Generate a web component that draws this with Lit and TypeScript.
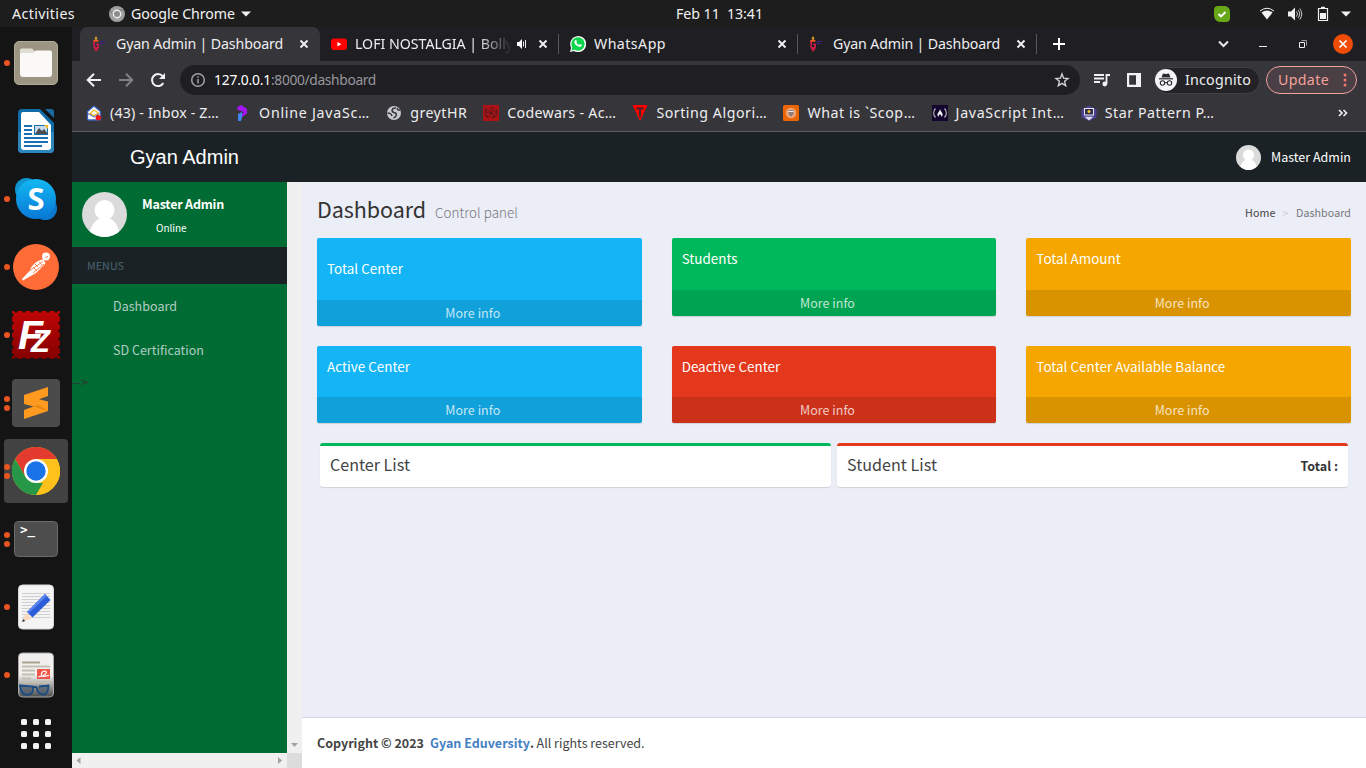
import { LitElement, html, css, svg, nothing } from "lit";
import { customElement, property, state } from "lit/decorators.js";
import { classMap } from "lit/directives/class-map.js";
import { styleMap } from "lit/directives/style-map.js";

/* A run of text tracked so that it occupies a given width. */
@customElement("fit-text")
class FitText extends LitElement {
  @property() text = "";
  @property({ type: Number }) w = 0;
  @state() tracking = 0;
  static styles = css`
    :host { display: inline-block; white-space: pre; flex: none; }
    .run { display: inline-block; }
  `;
  firstUpdated() {
    const run = this.renderRoot.querySelector(".run") as HTMLElement;
    const natural = run.getBoundingClientRect().width;
    if (this.w && this.text.length) this.tracking = (this.w - natural) / this.text.length;
  }
  render() {
    return html`<span class="run" style=${styleMap({ letterSpacing: `${this.tracking}px` })}>${this.text}</span>`;
  }
}

const t = (text: string, w: number) => html`<fit-text .text=${text} .w=${w}></fit-text>`;

const gyanIcon = svg`<svg width="16" height="16" viewBox="0 0 16 16">
  <path d="M4 0l1.500 2.500L4 4.500 2.500 2.500z" fill="#d99a22"/><path d="M1 4.500h5v1.500H3v5h2V9H4V7.500h3V12l-3 4-2.500-4z" fill="#c41c44"/><path d="M1.500 4h5v1.600h-5z" fill="#e0601c"/>
  <path d="M8 5.500h5.500M8 7.500h4M8.500 5v4" stroke="#41207f" fill="none"/></svg>`;
const youtubeIcon = svg`<svg width="16" height="16" viewBox="0 0 16 16"><rect y="2.500" width="16" height="11.500" rx="3" fill="#f00"/><path d="M6.400 6l4 2.200-4 2.200z" fill="#fff"/></svg>`;
const whatsappIcon = svg`<svg width="16" height="16" viewBox="0 0 16 16"><path d="M0 16l1.100-4.200A8 8 0 1 1 4 14.900z" fill="#fff"/><circle cx="8" cy="8" r="6.700" fill="#0cd54c"/><path d="M1.400 14.600l.9-3.400 2.400 2.500z" fill="#0cd54c"/>
  <path d="M5.200 4.200c.8-.7 1.300-.1 1.700 1.200.1.500-.6.900-.5 1.200.5 1 1.600 1.900 2.700 2.300.4 0 .7-.9 1.100-.8 1.800.7 1.800 1 1.300 1.800-1 1.500-3.100 1-4.900-.3C4.700 8.200 3.600 6 5.200 4.200z" fill="#fff"/></svg>`;
const crossIcon = svg`<svg width="16" height="16" viewBox="0 0 16 16"><path d="M4.500 4.500l7 7M11.500 4.500l-7 7" stroke="#f1f1f1" stroke-width="1.900"/></svg>`;
const audioIcon = svg`<svg width="14" height="14" viewBox="0 0 14 14"><path d="M2 5h2l3-3v10L4 9H2z" fill="#fff"/><path d="M8.500 4.500v5M10.500 3v8" stroke="#eee" stroke-width="1"/></svg>`;

interface Tab { icon: unknown; title: string; w: number; active?: boolean; audio?: boolean; }
const tabs: Tab[] = [
  { icon: gyanIcon, title: "Gyan Admin | Dashboard", w: 167, active: true },
  { icon: youtubeIcon, title: "LOFI NOSTALGIA | Bolly", w: 158, audio: true },
  { icon: whatsappIcon, title: "WhatsApp", w: 72 },
  { icon: gyanIcon, title: "Gyan Admin | Dashboard", w: 167 },
];

const bookmarks = [
  { title: "(43) - Inbox - Z…", w: 109, icon: svg`<svg width="16" height="16" viewBox="0 0 16 16"><path d="M1.500 6.500L8 1l6.500 5.500V14q0 1-1 1h-11q-1 0-1-1z" fill="#fff" stroke="#3b5fbd" stroke-width="1.300"/><path d="M4 8.500L8 5l4.500 3L8 10.500z" fill="#fff" stroke="#f0b51c" stroke-width="1.200"/><path d="M2 8.500L8 12l5.500-3.500" fill="none" stroke="#3b5fbd"/><circle cx="12.300" cy="12.800" r="2.700" fill="#f01818"/></svg>` },
  { title: "Online JavaSc…", w: 111, icon: svg`<svg width="16" height="16" viewBox="0 0 16 16"><path d="M2.500 2L6 0l6 4v4.500L7 12V9l2-2-6.500-2z" fill="#a515f5"/><path d="M3 9l4-2v5l-1 4H3z" fill="#3f86ee"/></svg>` },
  { title: "greytHR", w: 57, icon: svg`<svg width="16" height="16" viewBox="0 0 16 16"><circle cx="8" cy="8" r="7" fill="#c7cad0"/><path d="M10 3C5.500 3 5 6.500 8 7.500c4 1 2.500 4-.5 5.500M1.500 8c2.500 0 4 1 4.500 3M11 3l1 2h2" stroke="#37363b" stroke-width="1.500" fill="none"/></svg>` },
  { title: "Codewars - Ac…", w: 109, icon: svg`<svg width="16" height="16" viewBox="0 0 16 16"><rect width="16" height="16" fill="#ae1215"/><path d="M8 8C5 6 7 2 11 3M8 8c1-4 5-3 5 1M8 8c4 0 4 4 1 5M8 8c1 4-3 5-5 2M8 8C4 9 2 6 5 4M3 2.500C1.500 6 2 10 4.500 13M13 4c2 4 0 8-3 9" stroke="#4a1a1d" stroke-width="1" fill="none"/></svg>` },
  { title: "Sorting Algori…", w: 111, icon: svg`<svg width="16" height="16" viewBox="0 0 16 16"><path d="M.5 0h15L8 16z" fill="#f00"/><path d="M4.500 3.500h7M8 3.500V12" stroke="#43252a" stroke-width="2"/></svg>` },
  { title: "What is `Scop…", w: 108, icon: svg`<svg width="16" height="16" viewBox="0 0 16 16"><rect width="16" height="16" rx="1.500" fill="#ec6608"/><circle cx="8" cy="8" r="5.200" fill="#f0a678"/><path d="M5.500 5h5v4L8 12 5.500 9z" fill="#8a8078"/><path d="M5.500 6.500h5" stroke="#eee"/></svg>` },
  { title: "JavaScript Int…", w: 109, icon: svg`<svg width="16" height="16" viewBox="0 0 16 16"><rect width="16" height="16" fill="#13052d"/><path d="M3.500 3.500c-2.500 2.500-2.500 6.500 0 9M12.500 3.500c2.500 2.500 2.500 6.500 0 9" stroke="#bbb" stroke-width="1.100" fill="none"/><path d="M8 3.500c0 3-2.600 4-2.600 6.500L6.500 12c0-2 1-2 1.500-3 .5 1 1.500 1 1.500 3l1.200-2C10.700 7 8 6.500 8 3.500z" fill="#f5f5f5"/></svg>` },
  { title: "Star Pattern P…", w: 110, icon: svg`<svg width="16" height="16" viewBox="0 0 16 16"><path d="M8 .5l7.500 4v8L8 16 .5 12.500v-8z" fill="#4b4192"/><rect x="3.500" y="3.500" width="9" height="6.500" fill="#2c2c4c" stroke="#e8e8f4"/><circle cx="8" cy="6.500" r="1.500" fill="#f5c527"/><path d="M3.500 11.800h9L8 15.500z" fill="#dcdcec"/></svg>` },
];

const avatar = (size: number) => svg`<svg width=${size} height=${size} viewBox="0 0 45 45">
  <defs><clipPath id="disc"><circle cx="22.500" cy="22.500" r="22.500"/></clipPath></defs>
  <g clip-path="url(#disc)"><rect width="45" height="45" fill="#dbdbdb"/><circle cx="22.500" cy="18" r="10" fill="#fff"/><path d="M7 45C8 33 14 28 18 26h9c5 2 10 7 11 19z" fill="#fff"/></g></svg>`;

/* Launcher icons, each drawn in a 48px square. */
const files = svg`<svg width="48" height="48" viewBox="0 0 48 48"><rect x="2.500" y="2.500" width="43" height="43" rx="4.500" fill="#9c9583" stroke="#b0aa9a"/><path d="M8 13v-2q0-1.500 1.500-1.500H20l3 3h16v7H8z" fill="#e1ded4"/><path d="M8 15.500q0-1.500 1.500-1.500H21l3-2.500h14q2 0 2 2V35q0 3-3 3H11q-3 0-3-3z" fill="#faf9f8"/></svg>`;
const writer = svg`<svg width="48" height="48" viewBox="0 0 48 48"><path d="M10 2h18l14 14v26q0 4-4 4H10q-4 0-4-4V6q0-4 4-4z" fill="#0f6ca8"/><path d="M6 25h36v17q0 4-4 4H10q-4 0-4-4z" fill="#2b87bb"/><path d="M33 2h6q3 0 3 3v6z" fill="#1c6d9f"/><path d="M11 5h16l12 13v22q0 3-3 3H12q-3 0-3-3V8q0-3 2-3z" fill="#fff"/>
  <path d="M12 19h8M12 23h8M12 27h8M12 31h24M12 35h24M12 39h18" stroke="#1b72b3" stroke-width="2"/><rect x="22.500" y="18.500" width="13" height="9" fill="#c6dceb" stroke="#1b6faa"/><path d="M23 27l4-6 3 3 2-2 4 5z" fill="#4b4d50"/><path d="M32 18h4v4z" fill="#f0b91a"/></svg>`;
const skype = svg`<svg width="48" height="48" viewBox="0 0 48 48"><defs><linearGradient id="sky" x1="0" y1="0" x2="0" y2="1"><stop offset="0" stop-color="#13b8f1"/><stop offset="1" stop-color="#0878d7"/></linearGradient></defs>
  <circle cx="14.500" cy="14.500" r="11.500" fill="#0f94d2"/><circle cx="33.500" cy="33.500" r="11.500" fill="#0a78cf"/><circle cx="24" cy="24" r="20" fill="url(#sky)"/><text x="24" y="35" text-anchor="middle" font-family="Noto Sans" font-weight="700" font-size="31" fill="#fff">S</text></svg>`;
const postman = svg`<svg width="48" height="48" viewBox="0 0 48 48"><circle cx="24" cy="24" r="23" fill="#ff6c37"/><circle cx="34" cy="13.500" r="3.900" fill="#fff"/><path d="M31.500 16.500c-5 0-12 5-13.500 11L10 36l1 1.500 13-7.500 9.500-9.500z" fill="#fff"/><path d="M18 27.500l13-9M21 30l11-9M23 21l3 3M21 24l4 4M27 19l3 3" stroke="#ff6c37" stroke-width=".8" fill="none"/><path d="M33 14.500l3-1" stroke="#ff6c37" stroke-width=".8"/></svg>`;
const filezilla = svg`<svg width="48" height="48" viewBox="0 0 48 48"><defs><linearGradient id="fz" x1="0" y1="0" x2="0" y2="1"><stop offset="0" stop-color="#c00505"/><stop offset="1" stop-color="#850000"/></linearGradient></defs>
  <rect width="48" height="48" fill="url(#fz)"/><rect width="48" height="48" fill="none" stroke="#141414" stroke-width="3.400" stroke-linecap="round" stroke-dasharray="0 8" stroke-dashoffset="-4"/>
  <text x="6" y="38" font-family="Liberation Sans" font-weight="700" font-style="italic" font-size="41" fill="#fff">F<tspan dx="-12" dy="3" font-size="31">Z</tspan></text></svg>`;
const sublime = svg`<svg width="48" height="48" viewBox="0 0 48 48"><rect width="48" height="48" rx="4" fill="#4b4b4b"/><path d="M12 16l24-8v9l-9 3.300 9 2.200V32l-24 8v-9l9.500-3.500L12 25z" fill="#ff9a20"/><path d="M21.500 27.500L26 26l10 5.500v.5z" fill="#e8860f"/></svg>`;
const chrome = svg`<svg width="48" height="48" viewBox="0 0 48 48"><circle cx="24" cy="24" r="24" fill="#fbc116"/><path d="M3.200 12A24 24 0 0 1 44.800 12H24L13.600 30z" fill="#e33b2e"/><path d="M3.200 12l10.400 18L24 36h10.400L24 48A24 24 0 0 1 3.200 12z" fill="#279847"/><path d="M34.400 30L24 48a24 24 0 0 0 20.800-36H24z" fill="#fcc21b"/><circle cx="24" cy="24" r="12" fill="#fff"/><circle cx="24" cy="24" r="9.700" fill="#1a73e8"/></svg>`;
const terminal = svg`<svg width="48" height="48" viewBox="0 0 48 48"><rect x="2.500" y="6.500" width="43" height="35" rx="4" fill="#4d4d4d" stroke="#6c6c6c"/><text x="8" y="19" font-family="DejaVu Sans Mono" font-weight="700" font-size="12.500" fill="#fff">&gt;_</text></svg>`;
const editor = svg`<svg width="48" height="48" viewBox="0 0 48 48"><rect x="6.500" y="2" width="35" height="44" rx="4" fill="#f4f4f4" stroke="#d8d8d8"/><path d="M10 10.500h28M10 13.500h28M10 16.500h28M10 19.500h28M10 22.500h28M10 25.500h28M10 28.500h28M10 31.500h28M10 34.500h28" stroke="#cfcfcf"/><path d="M10 39l4-9 6 5z" fill="#fbd9be"/><path d="M10 39l1.200-3 2 2z" fill="#333"/><path d="M15 29l18-18 5.500 6-18 17.500z" fill="#2c5cd8"/><path d="M15 29l18-18 2 2-18 17z" fill="#5583ee"/></svg>`;
const viewer = svg`<svg width="48" height="48" viewBox="0 0 48 48"><defs><linearGradient id="vw" x1="0" y1="0" x2="0" y2="1"><stop offset=".5" stop-color="#f1f0ee"/><stop offset="1" stop-color="#4c4c4c"/></linearGradient></defs><rect x="6.500" y="2" width="35" height="44" rx="4" fill="url(#vw)" stroke="#a8a8a8"/><path d="M10 11.500h18" stroke="#a8a290" stroke-width="2"/><path d="M10 15.500h28M10 19.500h13M10 23.500h13M10 27.500h9M10 31.500h28" stroke="#c2beb0" stroke-width="1.800"/><rect x="25" y="18" width="13" height="10" fill="#ef5548"/><path d="M26.500 25.500c6 .5 10-5 6.500-5.500-4 0-5 5.500-1.500 5.500 2 0 4-1.500 5.500-1" fill="none" stroke="#fff" stroke-width="1.200"/><path d="M8 34.500l13 1q1 8-5 8.300-6 0-7-5zM27 35.500l9.500-1q0 8-4.500 9-6 0-7-5l-1-2.500h-3" fill="#53606e" fill-opacity=".7" stroke="#1b4c84" stroke-width="1.800"/></svg>`;
const grid = svg`<svg width="48" height="48" viewBox="0 0 48 48">${[9, 21, 33].map((y) => [9, 21, 33].map((x) => svg`<rect x=${x} y=${y} width="6" height="6" rx="1.500" fill="#f2f2f2"/>`))}</svg>`;

const dock = [
  { icon: files, dots: 1 }, { icon: writer, dots: 0 }, { icon: skype, dots: 1 }, { icon: postman, dots: 1 },
  { icon: filezilla, dots: 1 }, { icon: sublime, dots: 2 }, { icon: chrome, dots: 2, on: true }, { icon: terminal, dots: 2 },
  { icon: editor, dots: 1 }, { icon: viewer, dots: 1 },
];

@customElement("ubuntu-dock")
class UbuntuDock extends LitElement {
  static styles = css`
    :host { display: flex; flex-direction: column; width: 72px; flex: none; background: #141414; padding-top: 2px; box-sizing: border-box; }
    .item { display: flex; align-items: center; height: 68px; padding-left: 4px; }
    .tile { display: flex; align-items: center; height: 64px; width: 64px; border-radius: 4px; }
    .tile.on { background: #424242; }
    .dots { display: flex; flex-direction: column; gap: 3px; width: 8px; }
    .dot { width: 6px; height: 6px; border-radius: 50%; background: #e95420; }
    .apps { display: flex; justify-content: center; padding-top: 1px; }
    svg { display: block; }
  `;
  render() {
    return html`${dock.map((d) => html`<div class="item"><div class=${classMap({ tile: true, on: !!d.on })}>
        <div class="dots">${Array.from({ length: d.dots }, () => html`<span class="dot"></span>`)}</div>${d.icon}</div></div>`)}
      <div class="apps">${grid}</div>`;
  }
}

@customElement("chrome-frame")
class ChromeFrame extends LitElement {
  static styles = css`
    :host { display: flex; flex-direction: column; height: 105px; flex: none; background: #36353a; color: #eeeef0; font: 14.200px/20px "Noto Sans", sans-serif; box-sizing: border-box; border-bottom: 1px solid #5b5a5f; }
    svg { display: block; flex: none; }
    .strip { display: flex; height: 34px; background: #1f1e23; padding-left: 8px; }
    .tab { display: flex; align-items: center; width: 239px; box-sizing: border-box; padding: 0 8px 0 11px; gap: 8px; }
    .tab:first-child { width: 240px; padding-left: 12px; }
    .tab.active { background: #36353a; border-radius: 8px 8px 0 0; }
    .tab.line { background: linear-gradient(#58575c, #58575c) right 7px / 1px 20px no-repeat; }
    .title { flex: 1; overflow: hidden; height: 20px; white-space: nowrap; }
    .title.fade { mask-image: linear-gradient(90deg, #000 78%, transparent); }
    .audio { margin-right: -2px; margin-left: -5px; }
    .plus { display: flex; align-items: center; margin-left: 15px; }
    .wins { display: flex; align-items: center; margin-left: auto; padding-right: 13px; gap: 20px; }
    .bar { display: flex; align-items: center; height: 38px; padding-left: 6px; }
    .cell { display: flex; justify-content: center; width: 32px; }
    .omni { display: flex; align-items: center; box-sizing: border-box; width: 900px; height: 30px; border-radius: 15px; background: #1f1e23; margin: 0 6px; padding: 0 10px; gap: 8px; font-size: 13.800px; }
    .host { display: flex; flex: 1; color: #fff; }
    .path { color: #98979c; }
    .inc { display: flex; align-items: center; box-sizing: border-box; margin-left: 4px; width: 106px; height: 27px; border-radius: 14px; background: #232327; border: 1px solid #414045; gap: 8px; }
    .upd { display: flex; align-items: center; box-sizing: border-box; margin-left: 6px; width: 91px; height: 28px; border-radius: 14px; border: 1px solid #f0a29c; background: #493f44; color: #f3a29b; padding-left: 11px; gap: 14px; }
    .marks { display: flex; align-items: center; height: 28px; padding: 0 16px 0 14px; gap: 16.100px; }
    .mark { display: flex; align-items: center; gap: 8px; }
    .more { margin-left: auto; }
  `;
  render() {
    return html`
      <div class="strip">
        ${tabs.map((tab) => html`<div class=${classMap({ tab: true, active: !!tab.active, line: !tab.active })}>
          ${tab.icon}<div class=${classMap({ title: true, fade: !!tab.audio })}>${t(tab.title, tab.w)}</div>
          ${tab.audio ? html`<span class="audio">${audioIcon}</span>` : nothing}${crossIcon}</div>`)}
        <div class="plus"><svg width="14" height="14" viewBox="0 0 14 14"><path d="M7 1v12M1 7h12" stroke="#fff" stroke-width="2"/></svg></div>
        <div class="wins">
          <svg width="20" height="20" viewBox="0 0 20 20"><path d="M6 7.500l4.500 4.500L15 7.500" stroke="#e8e8e8" stroke-width="2" fill="none"/></svg>
          <svg width="20" height="20" viewBox="0 0 20 20"><path d="M6 12.500h8" stroke="#eee"/></svg>
          <svg width="20" height="20" viewBox="0 0 20 20"><path d="M6.500 8.500h5v5h-5z" stroke="#eee" fill="none"/><path d="M8.500 6.500h5v5" stroke="#99989c" fill="none"/></svg>
          <svg width="20" height="20" viewBox="0 0 20 20"><circle cx="10" cy="10" r="10" fill="#ef4c07"/><path d="M6.500 6.500l7 7M13.500 6.500l-7 7" stroke="#fff" stroke-width="1.700"/></svg>
        </div>
      </div>
      <div class="bar">
        <span class="cell"><svg width="16" height="16" viewBox="0 0 16 16"><path d="M15 8H2.500M8 1.700L1.700 8 8 14.300" stroke="#f1f1f3" stroke-width="2" fill="none"/></svg></span>
        <span class="cell"><svg width="16" height="16" viewBox="0 0 16 16"><path d="M1 8h12.500M8 1.700L14.300 8 8 14.300" stroke="#828186" stroke-width="2" fill="none"/></svg></span>
        <span class="cell"><svg width="16" height="16" viewBox="0 0 16 16"><path d="M13.300 11A6 6 0 1 1 12.600 4.200" stroke="#f1f1f3" stroke-width="2" fill="none"/><path d="M15 1v6H9z" fill="#f1f1f3"/></svg></span>
        <div class="omni">
          <svg width="16" height="16" viewBox="0 0 16 16"><circle cx="8" cy="8" r="6.300" fill="none" stroke="#a2a1a6" stroke-width="1.500"/><path d="M8 7v4.500M8 4.200v1.600" stroke="#a2a1a6" stroke-width="1.500"/></svg>
          <div class="host">${t("127.0.0.1", 57)}<span class="path">${t(":8000/dashboard", 105)}</span></div>
          <svg width="16" height="16" viewBox="0 0 16 16"><path d="M8 2l1.600 4.200 4.400.3-3.400 2.800 1.100 4.400L8 11.300l-3.700 2.400 1.100-4.400L2 6.500l4.400-.3z" fill="none" stroke="#d2d1d6" stroke-width="1.400"/></svg>
        </div>
        <span class="cell"><svg width="18" height="16" viewBox="0 0 18 16"><path d="M1 3h10M1 6.500h10M1 10h6M13.500 12V3h3.500" stroke="#f1f1f3" stroke-width="1.800" fill="none"/><circle cx="11.800" cy="12" r="2.400" fill="#f1f1f3"/></svg></span>
        <span class="cell"><svg width="14" height="14" viewBox="0 0 14 14"><path d="M0 0h14v14H0zM2.200 2.200v9.600H9V2.200z" fill="#f1f1f3" fill-rule="evenodd"/></svg></span>
        <div class="inc"><svg width="22" height="22" viewBox="0 0 22 22"><circle cx="11" cy="11" r="11" fill="#f4f4f6"/><path d="M4 9.800h14" stroke="#2a292e" stroke-width="1.200"/><path d="M6.500 8.500L8 4.500l3 .6 3-.6 1.500 4z" fill="#2a292e"/><circle cx="7.500" cy="14" r="2.200" fill="none" stroke="#2a292e" stroke-width="1.100"/><circle cx="14.500" cy="14" r="2.200" fill="none" stroke="#2a292e" stroke-width="1.100"/><path d="M9.500 13.700h3" stroke="#2a292e"/></svg>${t("Incognito", 66)}</div>
        <div class="upd">${t("Update", 51)}<svg width="4" height="16" viewBox="0 0 4 16"><circle cx="2" cy="3" r="1.500" fill="#f3786d"/><circle cx="2" cy="8" r="1.500" fill="#f3786d"/><circle cx="2" cy="13" r="1.500" fill="#f3786d"/></svg></div>
      </div>
      <div class="marks">
        ${bookmarks.map((b) => html`<div class="mark">${b.icon}${t(b.title, b.w)}</div>`)}
        <svg class="more" width="14" height="14" viewBox="0 0 14 14"><path d="M3 4l3 3-3 3M7.500 4l3 3-3 3" stroke="#eee" stroke-width="1.700" fill="none"/></svg>
      </div>`;
  }
}

interface Card { title: string; w: number; tone: string; size: string; }
const cards: Card[] = [
  { title: "Total Center", w: 76, tone: "aqua", size: "tall" },
  { title: "Students", w: 56, tone: "green", size: "mid" },
  { title: "Total Amount", w: 84.5, tone: "amber", size: "mid" },
  { title: "Active Center", w: 83, tone: "aqua", size: "low" },
  { title: "Deactive Center", w: 98.5, tone: "red", size: "low" },
  { title: "Total Center Available Balance", w: 189, tone: "amber", size: "low" },
];

@customElement("gyan-admin")
class GyanAdmin extends LitElement {
  static styles = css`
    :host { display: flex; flex-direction: column; flex: 1; min-height: 0; font: 12.500px/20px "Noto Sans CJK SC", "Noto Sans CJK JP", sans-serif; color: #333; background: #ebeef6; }
    svg { display: block; flex: none; }
    .head { display: flex; align-items: center; height: 50px; flex: none; background: #1a2226; color: #fff; padding: 0 15px 0 58px; }
    .logo { font: 20px/50px "Liberation Sans", sans-serif; }
    .user { display: flex; align-items: center; gap: 10px; margin-left: auto; }
    .main { display: flex; flex: 1; min-height: 0; }
    .side { display: grid; grid-template: 1fr 15px / 215px 15px; width: 230px; flex: none; background: #f0f0f0; }
    .nav { background: #006c33; overflow: hidden; }
    .panel { display: flex; height: 65px; box-sizing: border-box; padding: 10px; gap: 15px; color: #fff; }
    .name { font-weight: 700; height: 20px; padding-top: 2px; }
    .online { font-size: 10px; padding: 4px 0 0 14px; }
    .menus { height: 37px; line-height: 37px; background: #1a2226; color: #4b646f; font-size: 10.700px; padding-left: 15px; }
    .link { height: 44px; line-height: 44px; padding-left: 41px; color: #b0cdc4; }
    .stray { line-height: 20px; color: #333; }
    .vs { display: flex; align-items: end; justify-content: center; padding-bottom: 3px; }
    .hs { display: flex; align-items: center; justify-content: space-between; padding: 0 4px 0 3px; }
    .corner { background: #dcdcdc; }
    .body { display: flex; flex-direction: column; flex: 1; }
    .title { display: flex; align-items: baseline; height: 56px; box-sizing: border-box; padding: 12px 15px 0; }
    .h1 { font-size: 21.500px; line-height: 30px; }
    .sub { font-size: 13.400px; font-weight: 300; color: #77777c; margin-left: 9px; }
    .crumbs { display: flex; align-self: flex-start; gap: 7px; margin-left: auto; padding-top: 9px; font-size: 10.700px; color: #77777c; }
    .home { color: #444; }
    .sep { color: #c8cad2; }
    .cards { display: grid; grid-template-columns: repeat(3, 1fr); grid-template-rows: 108px 97px; column-gap: 30px; align-items: start; padding: 0 15px; }
    .card { display: flex; flex-direction: column; border-radius: 2px; box-shadow: 0 1px 1px rgba(0, 0, 0, .12); overflow: hidden; color: #fff; font-size: 13.400px; }
    .tall { height: 88px; }
    .mid { height: 78px; }
    .low { height: 77px; }
    .aqua { background: #13b5f6; }
    .green { background: #00b85c; }
    .amber { background: #f5a600; }
    .red { background: #e4381d; }
    .label { flex: 1; padding: 10px 10px 0; }
    .tall .label { padding-top: 20px; }
    .info { height: 26px; line-height: 26px; text-align: center; background: rgba(0, 0, 0, .11); color: rgba(255, 255, 255, .75); font-size: 12.500px; padding-right: 13px; }
    .lists { display: grid; grid-template-columns: 1fr 1fr; gap: 6px; padding: 0 18px; }
    .list { display: flex; justify-content: space-between; height: 44px; box-sizing: border-box; border-top: 3px solid; border-radius: 3px; background: #fff; padding: 8px 10px 0; box-shadow: 0 1px 1px rgba(0, 0, 0, .12); }
    .list.g { border-color: #00b85c; }
    .list.r { border-color: #e4381d; }
    .cap { font-size: 16.100px; color: #444; }
    .total { font-weight: 700; padding-top: 2px; }
    .foot { display: flex; margin-top: auto; height: 51px; box-sizing: border-box; border-top: 1px solid #d0d4de; background: #fff; padding: 15px; color: #444; }
    .bold { font-weight: 700; }
    .blue { color: #4380c4; margin-left: 6px; }
    .rights { margin-left: 2.500px; }
  `;
  render() {
    return html`
      <div class="head"><span class="logo">${t("Gyan Admin", 109)}</span><div class="user">${avatar(25)}${t("Master Admin", 80)}</div></div>
      <div class="main">
        <div class="side">
          <div class="nav">
            <div class="panel">${avatar(45)}<div><div class="name">${t("Master Admin", 82)}</div><div class="online">${t("Online", 30.5)}</div></div></div>
            <div class="menus">${t("MENUS", 37)}</div>
            <div class="link">${t("Dashboard", 64)}</div><div class="link">${t("SD Certification", 91)}</div>
            <div class="stray">${t("-->", 16)}</div>
          </div>
          <div class="vs"><svg width="9" height="9" viewBox="0 0 9 9"><path d="M1 2h7L4.500 6z" fill="#a3a3a3"/></svg></div>
          <div class="hs"><svg width="8" height="9" viewBox="0 0 8 9"><path d="M5.500 1v7L1.500 4.500z" fill="#a3a3a3"/></svg><svg width="8" height="9" viewBox="0 0 8 9"><path d="M3 1v7l4-3.500z" fill="#a3a3a3"/></svg></div>
          <div class="corner"></div>
        </div>
        <div class="body">
          <div class="title"><span class="h1">${t("Dashboard", 109)}</span><span class="sub">${t("Control panel", 83)}</span>
            <div class="crumbs"><span class="home">${t("Home", 30.5)}</span><span class="sep">${t(">", 6.5)}</span>${t("Dashboard", 55)}</div></div>
          <div class="cards">${cards.map((c) => html`<div class="card ${c.tone} ${c.size}"><div class="label">${t(c.title, c.w)}</div><div class="info">${t("More info", 55)}</div></div>`)}</div>
          <div class="lists">
            <div class="list g"><span class="cap">${t("Center List", 80)}</span></div>
            <div class="list r"><span class="cap">${t("Student List", 90)}</span><span class="total">${t("Total :", 37.5)}</span></div>
          </div>
          <div class="foot"><span class="bold">${t("Copyright © 2023", 107)}</span><span class="bold blue">${t("Gyan Eduversity", 100)}</span><span class="bold">.</span><span class="rights">${t("All rights reserved.", 108)}</span></div>
        </div>
      </div>`;
  }
}

@customElement("app-root")
class AppRoot extends LitElement {
  static styles = css`
    :host { display: flex; flex-direction: column; width: 1366px; height: 768px; overflow: hidden; }
    svg { display: block; flex: none; }
    .top { display: flex; align-items: center; height: 27px; flex: none; background: #1d1d1d; color: #f2f2f2; font: 14.200px/20px "Noto Sans", sans-serif; padding: 0 15px 0 12px; }
    .app { display: flex; align-items: center; gap: 6px; margin-left: 34px; width: 567px; box-sizing: border-box; }
    .tray { display: flex; align-items: center; margin-left: auto; gap: 12px; }
    .skype { margin-right: 17px; }
    .battery { margin-left: 2px; }
    .desk { display: flex; flex: 1; min-height: 0; }
    .win { display: flex; flex-direction: column; width: 1294px; }
  `;
  render() {
    return html`
      <div class="top">${t("Activities", 63)}
        <div class="app"><svg width="16" height="16" viewBox="0 0 16 16"><circle cx="8" cy="8" r="8" fill="#a0a0a0"/><path d="M1 4l5 8M8 4h7" stroke="#777"/><circle cx="8" cy="8" r="4.400" fill="#eee"/><circle cx="8" cy="8" r="3" fill="#8b8b8b"/></svg>${t("Google Chrome", 104)}<svg width="10" height="6" viewBox="0 0 10 6"><path d="M0 .5h10L5 5.500z" fill="#f2f2f2"/></svg></div>
        ${t("Feb 11  13:41", 87)}
        <div class="tray">
          <svg class="skype" width="16" height="16" viewBox="0 0 16 16"><path d="M4 0h7q5 1 5 6v6q0 4-4 4H7q-6 0-7-6V4q0-4 4-4z" fill="#68a818"/><path d="M4.500 8l2.500 2.500L11.500 6" stroke="#fff" stroke-width="1.900" fill="none"/></svg>
          <svg width="16" height="16" viewBox="0 0 16 16"><path d="M1 5q7-5.500 14 0" fill="none" stroke="#f2f2f2"/><path d="M2.500 6.500Q8 2.500 13.500 6.500L8 13.500z" fill="#f2f2f2"/></svg>
          <svg width="16" height="16" viewBox="0 0 16 16"><path d="M1 5.500h3l4-4v13l-4-4H1z" fill="#f2f2f2"/><path d="M9.500 5.500q2 2.500 0 5M11 4q3.500 4 0 8M12.800 2.500q4 5.500 0 11" stroke="#ccc" fill="none"/></svg>
          <svg class="battery" width="12" height="16" viewBox="0 0 12 16"><path d="M1.500 2.500h9v12h-9z" fill="none" stroke="#f2f2f2" stroke-width="1.200"/><path d="M4 .7h4v2H4zM3 7h6v6H3z" fill="#f2f2f2"/></svg>
          <svg width="10" height="6" viewBox="0 0 10 6"><path d="M0 .5h10L5 5.500z" fill="#f2f2f2"/></svg>
        </div>
      </div>
      <div class="desk"><ubuntu-dock></ubuntu-dock><div class="win"><chrome-frame></chrome-frame><gyan-admin></gyan-admin></div></div>`;
  }
}
